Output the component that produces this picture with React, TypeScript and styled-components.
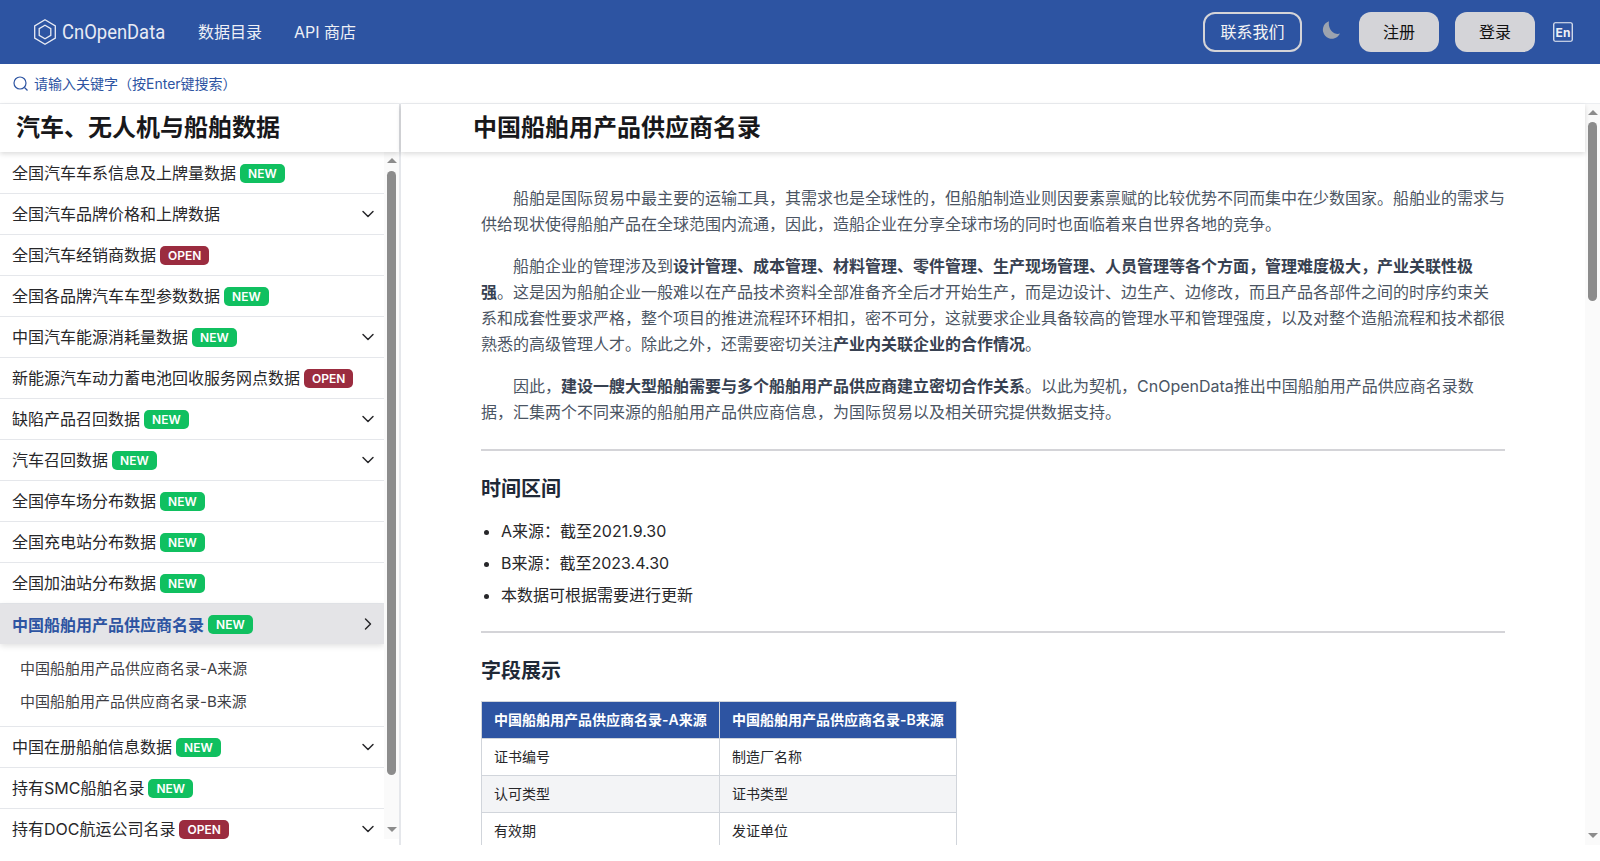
import React from "react";
import styled, { createGlobalStyle } from "styled-components";
import { ChevronDown, ChevronRight } from "lucide-react";

const Global = createGlobalStyle`
  html, body { margin: 0; padding: 0; background: #fff; overflow: hidden; }
  body { font-family: Inter, "Noto Sans CJK SC", sans-serif; }
  * { box-sizing: border-box; }
`;

const Page = styled.div`
  height: 861px;
  display: flex;
  flex-direction: column;
  overflow: hidden;
`;
const Header = styled.header`
  height: 64px;
  flex: none;
  background: #2d54a2;
  display: flex;
  align-items: center;
  padding: 0 27px 0 34px;
  color: #f4f4f5;
`;
const Logo = styled.div`
  display: flex;
  align-items: center;
  gap: 6px;
  width: 164px;
`;
const LogoText = styled.span`
  font-family: Roboto, sans-serif;
  font-size: 20px;
  font-weight: 400;
  color: #e8ebf4;
  transform: scaleX(0.92);
  transform-origin: left center;
`;
const NavLink = styled.a<{ $ml: number }>`
  font-size: 16px;
  margin-left: ${(p) => p.$ml}px;
  margin-top: -3px;
  color: #eef0f6;
`;
const Spacer = styled.div`
  flex: 1;
`;
const Outline = styled.button`
  width: 99px;
  height: 40px;
  padding: 0 0 2px;
  border: 2px solid #d4d4d8;
  border-radius: 12px;
  background: transparent;
  color: #f4f4f5;
  font: 16px Inter, "Noto Sans CJK SC", sans-serif;
`;
const Solid = styled.button<{ $ml: number }>`
  width: 80px;
  height: 40px;
  padding: 0 0 2px;
  margin-left: ${(p) => p.$ml}px;
  border: 0;
  border-radius: 12px;
  background: #d4d4d8;
  color: #111;
  font: 16px Inter, "Noto Sans CJK SC", sans-serif;
`;
const IconWrap = styled.div<{ $ml: number; $mt?: number }>`
  display: flex;
  margin-left: ${(p) => p.$ml}px;
  margin-top: ${(p) => p.$mt ?? 0}px;
`;
const SearchBar = styled.div`
  height: 40px;
  flex: none;
  display: flex;
  align-items: center;
  gap: 6px;
  padding-left: 13px;
  border-bottom: 1px solid #eceef1;
`;
const SearchInput = styled.input`
  flex: 1;
  border: 0;
  outline: 0;
  padding: 0;
  font: 14px Inter, "Noto Sans CJK SC", sans-serif;
  &::placeholder { color: #2d54a2; opacity: 1; }
`;
const Body = styled.div`
  height: 741px;
  flex: none;
  display: flex;
`;
const Side = styled.aside`
  width: 401px;
  flex: none;
  display: flex;
  flex-direction: column;
  border-right: 2px solid #e5e7eb;
`;
const PanelTitle = styled.h1`
  margin: 0;
  height: 48px;
  flex: none;
  display: flex;
  align-items: center;
  padding-bottom: 5px;
  background: #fff;
  font-size: 24px;
  font-weight: 700;
  color: #18181b;
  box-shadow: 0 2px 5px rgba(0, 0, 0, 0.14);
  position: relative;
  z-index: 2;
`;
const SideTitle = styled(PanelTitle)`
  padding-left: 16px;
`;
const SideBody = styled.div`
  flex: 1;
  min-height: 0;
  display: flex;
  margin-bottom: 6px;
`;
const List = styled.div`
  flex: 1;
  min-width: 0;
  overflow: hidden;
  padding-top: 1px;
`;
const Track = styled.div`
  width: 15px;
  flex: none;
  display: flex;
  flex-direction: column;
  align-items: center;
  background: #fafafa;
`;
const ArrowBox = styled.div<{ $end?: boolean }>`
  height: 16px;
  flex: none;
  margin-top: ${(p) => (p.$end ? "auto" : "0")};
  display: flex;
  align-items: ${(p) => (p.$end ? "flex-start" : "flex-end")};
  padding: ${(p) => (p.$end ? "4px" : "6px")} 0 ${(p) => (p.$end ? "0" : "5px")};
`;
const Triangle = styled.div<{ $down?: boolean }>`
  width: 0;
  height: 0;
  border-left: 5px solid transparent;
  border-right: 5px solid transparent;
  ${(p) => (p.$down ? "border-top: 5px solid #8c8c8c;" : "border-bottom: 5px solid #8c8c8c;")}
`;
const Thumb = styled.div<{ $h: number; $mt: number }>`
  width: 9px;
  height: ${(p) => p.$h}px;
  margin-top: ${(p) => p.$mt}px;
  flex: none;
  border-radius: 5px;
  background: #8c8c8c;
`;
const Badge = styled.span<{ $open?: boolean }>`
  height: 19px;
  display: inline-flex;
  align-items: center;
  padding: 0 8px;
  border-radius: 5px;
  background: ${(p) => (p.$open ? "#9b2c3f" : "#10c060")};
  color: #fff;
  font-size: 12px;
  font-weight: 600;
`;
const Chevron = styled.span`
  margin-left: auto;
  display: flex;
  color: #27272a;
`;
const Row = styled.div`
  height: 41px;
  display: flex;
  align-items: center;
  padding: 0 6px 2px 12px;
  font-size: 16px;
  gap: 4px;
  color: #27272a;
  border-bottom: 1px solid #e5e7eb;
  ${Badge}, ${Chevron} {
    margin-top: 2px;
  }
`;
const ActiveRow = styled.div`
  height: 40px;
  display: flex;
  align-items: center;
  padding: 0 6px 0 12px;
  font-size: 16px;
  gap: 4px;
  color: #2d54a2;
  font-weight: 600;
  background: #e4e4e7;
  box-shadow: 0 2px 6px rgba(0, 0, 0, 0.12);
`;
const SubList = styled.div`
  padding: 7px 0 9px;
  border-bottom: 1px solid #e5e7eb;
`;
const SubItem = styled.div`
  height: 33px;
  display: flex;
  align-items: center;
  padding-left: 20px;
  font-size: 15px;
  color: #3f3f46;
`;
const Main = styled.main`
  flex: 1;
  min-width: 0;
  display: flex;
`;
const MainColumn = styled.div`
  flex: 1;
  min-width: 0;
  display: flex;
  flex-direction: column;
`;
const MainScroll = styled.div`
  flex: 1;
  min-height: 0;
  overflow: hidden;
`;
const MainTitle = styled(PanelTitle)`
  padding-left: 72px;
`;
const Article = styled.article`
  width: 1024px;
  margin-left: 80px;
  padding-top: 33px;
  font-size: 16px;
  line-height: 26px;
  color: #4b5563;
`;
const Para = styled.p`
  margin: 0 0 16px;
  text-indent: 32px;
`;
const Strong = styled.strong`
  font-weight: 600;
  color: #374151;
`;
const Rule = styled.hr<{ $mt: number }>`
  margin: ${(p) => p.$mt}px 0 0;
  border: 0;
  border-top: 2px solid #d4d4d8;
`;
const Heading = styled.h3`
  margin: 24px 0 12px;
  font-size: 20px;
  line-height: 28px;
  font-weight: 600;
  color: #1f2937;
`;
const Bullets = styled.ul`
  margin: 0;
  padding: 0 0 0 20px;
  color: #27272a;
`;
const Bullet = styled.li`
  height: 32px;
  line-height: 32px;
`;
const Table = styled.table`
  border-collapse: collapse;
  width: 476px;
  font-size: 14px;
  margin-top: 16px;
`;
const Th = styled.th`
  background: #2d54a2;
  color: #fff;
  font-weight: 600;
  height: 37px;
  padding: 0 12px;
  text-align: left;
  border: 1px solid #d1d5db;
`;
const Td = styled.td`
  height: 37px;
  padding: 0 12px;
  border: 1px solid #d1d5db;
  color: #27272a;
`;
const Tr = styled.tr<{ $alt?: boolean }>`
  background: ${(p) => (p.$alt ? "#f3f4f6" : "#fff")};
`;

type Item = { t: string; b?: "NEW" | "OPEN"; c?: boolean };
const before: Item[] = [
  { t: "全国汽车车系信息及上牌量数据", b: "NEW" },
  { t: "全国汽车品牌价格和上牌数据", c: true },
  { t: "全国汽车经销商数据", b: "OPEN" },
  { t: "全国各品牌汽车车型参数数据", b: "NEW" },
  { t: "中国汽车能源消耗量数据", b: "NEW", c: true },
  { t: "新能源汽车动力蓄电池回收服务网点数据", b: "OPEN" },
  { t: "缺陷产品召回数据", b: "NEW", c: true },
  { t: "汽车召回数据", b: "NEW", c: true },
  { t: "全国停车场分布数据", b: "NEW" },
  { t: "全国充电站分布数据", b: "NEW" },
  { t: "全国加油站分布数据", b: "NEW" },
];
const after: Item[] = [
  { t: "中国在册船舶信息数据", b: "NEW", c: true },
  { t: "持有SMC船舶名录", b: "NEW" },
  { t: "持有DOC航运公司名录", b: "OPEN", c: true },
];

const SideRow = ({ item }: { item: Item }) => (
  <Row>
    {item.t}
    {item.b && <Badge $open={item.b === "OPEN"}>{item.b}</Badge>}
    {item.c && (
      <Chevron>
        <ChevronDown size={20} strokeWidth={1.75} />
      </Chevron>
    )}
  </Row>
);

const Scrollbar = ({ thumb, gap }: { thumb: number; gap: number }) => (
  <Track>
    <ArrowBox>
      <Triangle />
    </ArrowBox>
    <Thumb $h={thumb} $mt={gap} />
    <ArrowBox $end>
      <Triangle $down />
    </ArrowBox>
  </Track>
);

export default function App() {
  return (
    <Page>
      <Global />
      <Header>
        <Logo>
          <svg width="22" height="26" viewBox="0 0 22 26" fill="none" stroke="#e8ebf4" strokeWidth="1.3">
            <path d="M11 .8 L21.3 6.9 V19.1 L11 25.2 L.7 19.1 V6.9 Z" />
            <path d="M11 6.2 L16.8 9.6 V16.4 L11 19.8 L5.2 16.4 V9.6 Z" />
          </svg>
          <LogoText>CnOpenData</LogoText>
        </Logo>
        <NavLink $ml={0}>数据目录</NavLink>
        <NavLink $ml={32}>API 商店</NavLink>
        <Spacer />
        <Outline>联系我们</Outline>
        <IconWrap $ml={20} $mt={-4}>
          <svg width="18" height="18" viewBox="0 0 18 18">
            <path d="M7 .2 A9 9 0 1 0 18 12.6 C12 14.5 5.5 8 7 .2 Z" fill="#9ca3af" />
          </svg>
        </IconWrap>
        <Solid $ml={19}>注册</Solid>
        <Solid $ml={16}>登录</Solid>
        <IconWrap $ml={18}>
          <svg width="20" height="20" viewBox="0 0 20 20">
            <rect x="0.75" y="0.75" width="18.5" height="18.5" rx="1.5" fill="none" stroke="#eef0f6" strokeWidth="1.2" />
            <text x="10" y="14.5" textAnchor="middle" fontSize="12" fontWeight="700" fontFamily="Inter" fill="#eef0f6">En</text>
          </svg>
        </IconWrap>
      </Header>
      <SearchBar>
        <svg width="15" height="15" viewBox="0 0 15 15" fill="none" stroke="#2d54a2" strokeWidth="1.2">
          <circle cx="7" cy="7" r="6" />
          <path d="M11.5 11.5 L14.5 14.5" />
        </svg>
        <SearchInput placeholder="请输入关键字（按Enter键搜索）" />
      </SearchBar>
      <Body>
        <Side>
          <SideTitle>汽车、无人机与船舶数据</SideTitle>
          <SideBody>
            <List>
              {before.map((i) => (
                <SideRow key={i.t} item={i} />
              ))}
              <ActiveRow>
                中国船舶用产品供应商名录
                <Badge>NEW</Badge>
                <Chevron>
                  <ChevronRight size={20} strokeWidth={1.75} />
                </Chevron>
              </ActiveRow>
              <SubList>
                <SubItem>中国船舶用产品供应商名录-A来源</SubItem>
                <SubItem>中国船舶用产品供应商名录-B来源</SubItem>
              </SubList>
              {after.map((i) => (
                <SideRow key={i.t} item={i} />
              ))}
            </List>
            <Scrollbar thumb={604} gap={3} />
          </SideBody>
        </Side>
        <Main>
          <MainColumn>
            <MainTitle>中国船舶用产品供应商名录</MainTitle>
            <MainScroll>
              <Article>
                <Para>
                  船舶是国际贸易中最主要的运输工具，其需求也是全球性的，但船舶制造业则因要素禀赋的比较优势不同而集中在少数国家。船舶业的需求与供给现状使得船舶产品在全球范围内流通，因此，造船企业在分享全球市场的同时也面临着来自世界各地的竞争。
                </Para>
                <Para>
                  船舶企业的管理涉及到
                  <Strong>设计管理、成本管理、材料管理、零件管理、生产现场管理、人员管理等各个方面，管理难度极大，产业关联性极强</Strong>
                  。这是因为船舶企业一般难以在产品技术资料全部准备齐全后才开始生产，而是边设计、边生产、边修改，而且产品各部件之间的时序约束关系和成套性要求严格，整个项目的推进流程环环相扣，密不可分，这就要求企业具备较高的管理水平和管理强度，以及对整个造船流程和技术都很熟悉的高级管理人才。除此之外，还需要密切关注
                  <Strong>产业内关联企业的合作情况</Strong>。
                </Para>
                <Para>
                  因此，<Strong>建设一艘大型船舶需要与多个船舶用产品供应商建立密切合作关系</Strong>
                  。以此为契机，CnOpenData推出中国船舶用产品供应商名录数据，汇集两个不同来源的船舶用产品供应商信息，为国际贸易以及相关研究提供数据支持。
                </Para>
                <Rule $mt={24} />
                <Heading>时间区间</Heading>
                <Bullets>
                  <Bullet>A来源：截至2021.9.30</Bullet>
                  <Bullet>B来源：截至2023.4.30</Bullet>
                  <Bullet>本数据可根据需要进行更新</Bullet>
                </Bullets>
                <Rule $mt={20} />
                <Heading>字段展示</Heading>
                <Table>
                  <thead>
                    <tr>
                      <Th>中国船舶用产品供应商名录-A来源</Th>
                      <Th>中国船舶用产品供应商名录-B来源</Th>
                    </tr>
                  </thead>
                  <tbody>
                    <Tr>
                      <Td>证书编号</Td>
                      <Td>制造厂名称</Td>
                    </Tr>
                    <Tr $alt>
                      <Td>认可类型</Td>
                      <Td>证书类型</Td>
                    </Tr>
                    <Tr>
                      <Td>有效期</Td>
                      <Td>发证单位</Td>
                    </Tr>
                  </tbody>
                </Table>
              </Article>
            </MainScroll>
          </MainColumn>
          <Scrollbar thumb={179} gap={2} />
        </Main>
      </Body>
    </Page>
  );
}
